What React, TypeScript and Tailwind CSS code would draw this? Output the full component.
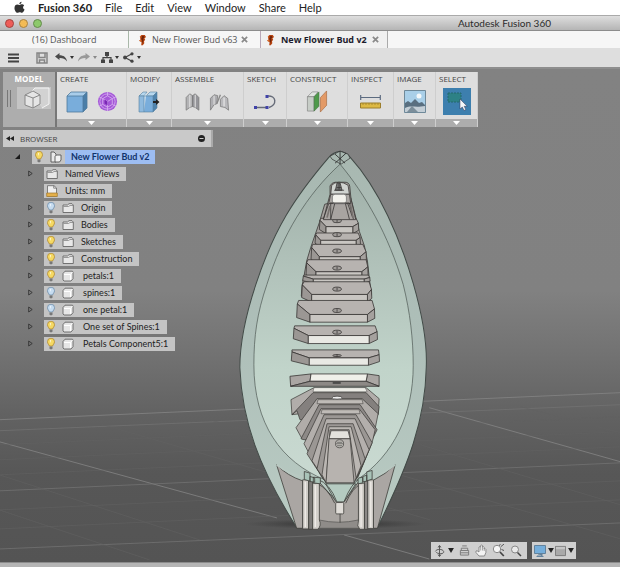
import React from "react";

const menus = ["File", "Edit", "View", "Window", "Share", "Help"];

function AppleLogo() {
  return (
    <svg viewBox="0 0 14 16" className="h-[13px] w-[11px]" aria-hidden="true">
      <path d="M9.6 0.6c.1 1.7-1.3 3-2.8 3C6.600 2 8.100.8 9.600.6zM12.900 5.400c-2.100 1.300-1.700 4.200.5 5.100-.7 2-2 4.300-3.400 4.300-1.100 0-1.400-.6-2.700-.6s-1.700.6-2.700.6C2.700 14.900.6 11.500.6 8.500c0-2.900 1.800-4.400 3.600-4.400 1.200 0 2.100.7 2.900.7.7 0 1.800-.8 3.200-.8 1.100 0 2 .5 2.600 1.400z" fill="#333" />
    </svg>
  );
}

function FlameIcon() {
  return (
    <svg viewBox="0 0 9 12" className="h-[12px] w-[9px]" aria-hidden="true">
      <path d="M3.500 1h3.300l1.200 2-1.600 1.400.8 1.400-1.200 1.400.3 2.100-1.500 2H3.200l.4-3L1 6.800 2.500 5.400 1.800 2.600z" fill="#b5420f" />
      <path d="M4.200 2h1.600l.5 1.200L5 4.800l.6 1.500L4.600 8 4 10 3.800 6 3.200 4z" fill="#6e240b" />
      <path d="M2 2.900 3 2.100l.4 2.200zM1.200 6.700l2-.6.4 1.700z" fill="#e67a32" />
    </svg>
  );
}

function CloseTab({ name }: { name: string }) {
  return (
    <button type="button" aria-label={"Close " + name} className="flex">
      <svg viewBox="0 0 8 8" className="h-[7px] w-[7px]" aria-hidden="true">
        <path d="M1 1l6 6M7 1L1 7" stroke="#8a8a8a" strokeWidth="2" />
      </svg>
    </button>
  );
}

const SmallCaret = ({ faint = false }: { faint?: boolean }) => (
  <svg viewBox="0 0 4 3" className="h-[3px] w-[4px]" aria-hidden="true">
    <path d="M0 0h4L2 3z" fill={faint ? "#888" : "#333"} />
  </svg>
);

function QuickBar() {
  return (
    <div className="flex h-[21px] items-center border-b-2 border-[#8e8e8e] bg-[#dedede] pl-2">
      <button type="button" aria-label="Data panel" className="mr-[17px]">
        <svg viewBox="0 0 11 10" className="h-[10px] w-[11px]"><path d="M0 1.500h11M0 5h11M0 8.500h11" stroke="#444" strokeWidth="1.800" /></svg>
      </button>
      <button type="button" aria-label="Save" className="mr-[7px]">
        <svg viewBox="0 0 12 12" className="h-[12px] w-[12px]" fill="none" stroke="#858585" strokeWidth="1.500">
          <path d="M1 1h10v10H1zM3 1v4.500h6V1M3.500 11V8h5v3" />
        </svg>
      </button>
      <button type="button" aria-label="Undo" className="mr-[4px] flex items-center gap-[3px]">
        <svg viewBox="0 0 12 9" className="h-[9px] w-[12px]"><path d="M0 3.500 4.500 0v2.200c4 0 7 2 7.500 6.300-2-3-4.500-3.700-7.500-3.600V7z" fill="#4a4a4a" /></svg>
        <SmallCaret />
      </button>
      <button type="button" aria-label="Redo" className="mr-[4px] flex items-center gap-[3px]">
        <svg viewBox="0 0 12 9" className="h-[9px] w-[12px]"><path d="M12 3.500 7.500 0v2.200C3.500 2.200.5 4.200 0 8.500c2-3 4.500-3.700 7.500-3.600V7z" fill="#999" /></svg>
        <SmallCaret faint />
      </button>
      <button type="button" aria-label="Hierarchy" className="mr-[4px] flex items-center gap-[2px]">
        <svg viewBox="0 0 12 11" className="h-[11px] w-[12px]"><path d="M4 0h4v4H4zM0 7.500h4V11H0zM8 7.500h4V11H8z" fill="#444" /><path d="M6 4v1.700M2 8V5.700h8V8" stroke="#444" strokeWidth="1.200" fill="none" /></svg>
        <SmallCaret />
      </button>
      <button type="button" aria-label="Share" className="flex items-center gap-[3px]">
        <svg viewBox="0 0 11 11" className="h-[11px] w-[11px]"><path d="M9 1.800 2 5.500l7 3.700" stroke="#444" strokeWidth="1.200" fill="none" /><circle cx="9" cy="1.800" r="1.600" fill="#444" /><circle cx="2" cy="5.500" r="1.900" fill="#444" /><circle cx="9" cy="9.200" r="1.600" fill="#444" /></svg>
        <SmallCaret />
      </button>
    </div>
  );
}

/* Ribbon icons */
const BoxIcon = () => (
  <svg viewBox="0 0 22 22" className="h-[22px] w-[22px]" aria-hidden="true">
    <path d="M1 5 5 1h16l-4 4z" fill="#a9cdea" /><path d="M17 5l4-4v16l-4 4z" fill="#4a7ea8" /><path d="M1 5h16v16H1z" fill="#79addb" />
    <path d="M1 5 5 1h16v16l-4 4H1zM1 5h16v16M17 5l4-4" fill="none" stroke="#4f7a9c" strokeWidth=".8" />
  </svg>
);
const FormIcon = () => (
  <svg viewBox="0 0 22 22" className="h-[21px] w-[21px]" aria-hidden="true">
    <circle cx="11" cy="11" r="10" fill="#a558d8" /><circle cx="11" cy="11" r="8" fill="none" stroke="#cfa2ec" strokeWidth="1" />
    <path d="M6 8l5-3 5 3v6l-5 3-5-3zM6 8l5 3 5-3M11 11v6M11 1v4M2 6l4 2M20 6l-4 2M2 16l4-2M20 16l-4-2M11 17v4" fill="none" stroke="#d6aef0" strokeWidth=".9" />
    <path d="M8 9l3 2v4l-3-2z" fill="#7b27b5" />
  </svg>
);
const PressIcon = () => (
  <svg viewBox="0 0 22 22" className="h-[22px] w-[22px]" aria-hidden="true">
    <path d="M1 5l4-4h4L6 5zM8 5l4-4h7l-4 4z" fill="#b7d7ee" stroke="#55809f" strokeWidth=".6" />
    <path d="M1 5h5v16H1z" fill="#8fbade" /><path d="M6 5l2.500-3v16L6 21z" fill="#cde2f2" /><path d="M8 5h7v16H6z" fill="#79addb" /><path d="M15 5l4-4v16l-4 4z" fill="#4f83ad" />
    <path d="M1 5h14v16H1zM6 5v16M15 5l4-4v16l-4 4" fill="none" stroke="#55809f" strokeWidth=".6" />
    <path d="M15 10h3V8l3.500 3L18 14v-2h-3z" fill="#222" />
  </svg>
);
const JointIcon = () => (
  <svg viewBox="0 0 16 22" className="h-[20px] w-[15px]" aria-hidden="true">
    <path d="M1 20V6l4-4 3 2v12l-3 1z" fill="#b3b3b5" stroke="#777" strokeWidth=".8" /><path d="M8 4l3-2 4 4v14l-4-3-3-1z" fill="#95959a" stroke="#777" strokeWidth=".8" /><path d="M5 3v14M11 3v14" stroke="#dedede" strokeWidth="1.200" />
  </svg>
);
const AsBuiltIcon = () => (
  <svg viewBox="0 0 22 22" className="h-[20px] w-[21px]" aria-hidden="true">
    <path d="M1 20V7l4-4 4 1-1 9-3 1z" fill="#aeaeb2" stroke="#777" strokeWidth=".8" /><path d="M5 4v10" stroke="#e0e0e0" strokeWidth="1.200" />
    <path d="M8 13 12 3" stroke="#888" strokeWidth="1.500" /><path d="M12 8l4-4 4 3 1 13-4-3-5-1z" fill="#b9b9bc" stroke="#777" strokeWidth=".8" /><path d="M16 6v10" stroke="#e2e2e2" strokeWidth="1.500" />
  </svg>
);
const SketchIcon = () => (
  <svg viewBox="0 0 22 16" className="h-[16px] w-[22px]" aria-hidden="true">
    <path d="M2 13.500h11M13 2c10-1 10 9 2 11.500" fill="none" stroke="#666b78" strokeWidth="1.400" />
    <path d="M0 12h3v3H0zM11.500 12h3v3h-3zM11.500 1h3v3h-3z" fill="#4143a8" />
  </svg>
);
const PlaneIcon = () => (
  <svg viewBox="0 0 22 24" className="h-[23px] w-[22px]" aria-hidden="true">
    <path d="M1 7l5-5h6L8 7z" fill="#e1e5e1" stroke="#777" strokeWidth=".6" /><path d="M1 7h7v15H1z" fill="#c7cdc7" stroke="#777" strokeWidth=".6" /><path d="M8 7l5-5v15l-5 5z" fill="#4e9a4a" stroke="#3c6e3a" strokeWidth=".6" />
    <path d="M14.500 8 21 1v15l-6.500 7z" fill="#e39a67" stroke="#a86a40" strokeWidth=".7" />
  </svg>
);
const MeasureIcon = () => (
  <svg viewBox="0 0 21 14" className="h-[14px] w-[21px]" aria-hidden="true">
    <path d="M.7 0v5M20.300 0v5M1 2.500h19" stroke="#5c6b80" strokeWidth="1.200" /><path d="M.5 8h20v5H.5z" fill="#ddb944" stroke="#9c7e2c" /><path d="M3 8v2M6 8v2M9 8v2M12 8v2M15 8v2M18 8v2" stroke="#9c7e2c" strokeWidth=".7" />
  </svg>
);
const PhotoIcon = () => (
  <svg viewBox="0 0 22 23" className="h-[23px] w-[22px]" aria-hidden="true">
    <path d="M.5.5h21v22H.5z" fill="#a9cfe8" stroke="#6f8999" /><circle cx="15" cy="6" r="2.500" fill="#f3f8fa" /><path d="M1 13l3-2 3 2 4-4 4 4 3-1 3 3v4H1z" fill="#596f80" /><path d="M1 18c6-3 10 0 20-2v6H1z" fill="#c3ced6" /><path d="M3 22l5-6 6 6z" fill="#7c8e9a" />
  </svg>
);
const SelectIcon = () => (
  <svg viewBox="0 0 28 27" className="h-[27px] w-[28px]" aria-hidden="true">
    <path d="M0 0h28v27H0z" fill="#3d7fae" /><path d="M5 5h13v9H5z" fill="#2d8186" stroke="#24686d" strokeDasharray="2 1" /><path d="M17 11v10l2.300-2 1.700 3.500 1.800-.9-1.600-3.300h3z" fill="#f5f8fa" stroke="#335" strokeWidth=".5" />
  </svg>
);

const panels = [
  { name: "CREATE", width: "w-[70px]", icons: [BoxIcon, FormIcon] },
  { name: "MODIFY", width: "w-[45px]", icons: [PressIcon] },
  { name: "ASSEMBLE", width: "w-[72px]", icons: [JointIcon, AsBuiltIcon] },
  { name: "SKETCH", width: "w-[43px]", icons: [SketchIcon] },
  { name: "CONSTRUCT", width: "w-[61px]", icons: [PlaneIcon] },
  { name: "INSPECT", width: "w-[46px]", icons: [MeasureIcon] },
  { name: "IMAGE", width: "w-[42px]", icons: [PhotoIcon] },
  { name: "SELECT", width: "w-[42px]", icons: [SelectIcon] },
];

function Ribbon() {
  return (
    <div className="flex h-[55px] w-fit bg-[#dedede] text-[8px] leading-[10px] text-[#444]">
      <button type="button" className="flex w-[54px] flex-col items-center border-r-2 border-[#777] bg-[#adadad] pt-[2px] font-bold text-white">
        MODEL
        <span className="mt-[3px] flex w-full items-center gap-[6px] pl-[4px]">
          <span className="h-[17px] w-[4px] border-x border-[#777]" />
          <svg viewBox="0 0 34 22" className="h-[22px] w-[34px]" aria-hidden="true">
            <path d="M0 0h34v22H0z" fill="#c4c4c4" /><path d="M14 5l4-4h14v16l-7 4" fill="#d2d2d2" stroke="#f4f4f4" /><path d="M8 8l8-4 7 4v9l-7 4-8-3z" fill="#e5e5e5" stroke="#888" /><path d="M8 8l8 3 7-3M16 11v10" fill="none" stroke="#888" />
          </svg>
        </span>
      </button>
      {panels.map((p) => (
        <section key={p.name} className={"flex flex-col border-r border-[#cecece] " + p.width}>
          <h2 className="pl-[3px] pt-[2px] text-[8px]">{p.name}</h2>
          <div className="flex flex-1 items-center justify-center gap-[9px]">
            {p.icons.map((Icon, i) => (
              <button type="button" key={i} aria-label={p.name + " tool " + (i + 1)}><Icon /></button>
            ))}
          </div>
          <button type="button" aria-label={p.name + " menu"} className="flex h-[8px] items-center justify-center bg-[#adadad]">
            <svg viewBox="0 0 7 4" className="h-[4px] w-[7px]"><path d="M0 0h7L3.500 4z" fill="#fff" /></svg>
          </button>
        </section>
      ))}
    </div>
  );
}

/* Browser tree */
const Bulb = ({ on = true }: { on?: boolean }) => (
  <svg viewBox="0 0 8 12" className="h-[12px] w-[8px]" aria-hidden="true">
    <path d="M2.400 8C1.900 6.300.5 5.700.5 3.700a3.500 3.500 0 0 1 7 0c0 2-1.400 2.600-1.900 4.300z" fill={on ? "#f5d964" : "#c6dcf0"} stroke={on ? "#b38a30" : "#6d8daa"} strokeWidth=".8" />
    <path d="M3 2.500 4 2l-.3 3z" fill="#fff" /><path d="M2.500 8.500h3v2.200L4 11.600l-1.500-.9z" fill="#777" />
  </svg>
);
const Folder = () => (
  <svg viewBox="0 0 12 10" className="h-[10px] w-[12px]" aria-hidden="true">
    <path d="M1 9.500V2h4.500L7 .7h3L11.300 2v7.500z" fill="#e8e8e8" stroke="#666" strokeWidth=".9" /><path d="M1.500 3.500h5L8 2.500h3" stroke="#777" strokeWidth=".7" fill="none" />
  </svg>
);
const Part = () => (
  <svg viewBox="0 0 12 12" className="h-[12px] w-[12px]" aria-hidden="true">
    <path d="M1 3.500 3 1.200h7.500l.5 1v6.500L9 11H2l-1-1z" fill="#e6e6e6" stroke="#666" strokeWidth=".9" /><path d="M2 4.500h6.500v5.500M8.500 4.500l2-2.500" fill="none" stroke="#fff" />
  </svg>
);
const Units = () => (
  <svg viewBox="0 0 12 12" className="h-[12px] w-[12px]" aria-hidden="true">
    <path d="M1.500.7H8L10.500 3v8h-9z" fill="#efefef" stroke="#666" strokeWidth=".8" /><path d="M.7 8h10.600v3.500H.7z" fill="#e4b04a" stroke="#9d772c" strokeWidth=".7" /><path d="M7.700.7V3.200h2.600" fill="none" stroke="#666" strokeWidth=".7" />
  </svg>
);
const RootIcon = () => (
  <svg viewBox="0 0 12 12" className="h-[12px] w-[12px]" aria-hidden="true">
    <path d="M1 11V1h3l2 2v8z" fill="#e9e9e9" stroke="#555" strokeWidth=".9" /><path d="M5 11V5.500L6.500 4H11v5l-1.500 2z" fill="#f2f2f2" stroke="#555" strokeWidth=".9" />
  </svg>
);

type Node = { label: string; kind: "folder" | "part" | "units"; bulb?: "on" | "off" };
const nodes: Node[] = [
  { label: "Named Views", kind: "folder" },
  { label: "Units: mm", kind: "units" },
  { label: "Origin", kind: "folder", bulb: "off" },
  { label: "Bodies", kind: "folder", bulb: "on" },
  { label: "Sketches", kind: "folder", bulb: "on" },
  { label: "Construction", kind: "folder", bulb: "on" },
  { label: "petals:1", kind: "part", bulb: "on" },
  { label: "spines:1", kind: "part", bulb: "off" },
  { label: "one petal:1", kind: "part", bulb: "off" },
  { label: "One set of Spines:1", kind: "part", bulb: "on" },
  { label: "Petals Component5:1", kind: "part", bulb: "on" },
];

function Browser() {
  return (
    <aside className="mt-[3px] w-[210px] font-['Lato','Open_Sans',sans-serif] text-[9px] leading-[14px] text-[#222]">
      <header className="flex h-[17px] items-center border-r-2 border-[#aaa] bg-[#c9c9c9] pl-[3px] pr-[6px]">
        <button type="button" aria-label="Collapse browser">
          <svg viewBox="0 0 8 5" className="h-[5px] w-[8px]"><path d="M4 0v5L0 2.500zM8 0v5L4 2.500z" fill="#222" /></svg>
        </button>
        <h2 className="ml-[6px] font-['Open_Sans','Noto_Sans',sans-serif] text-[8px] text-[#444]">BROWSER</h2>
        <button type="button" aria-label="Browser options" className="ml-auto">
          <svg viewBox="0 0 7 7" className="h-[7px] w-[7px]"><circle cx="3.500" cy="3.500" r="3.500" fill="#222" /><path d="M1.500 3.500h4" stroke="#ccc" /></svg>
        </button>
      </header>
      <ul className="mt-[2px] flex flex-col gap-[2px]">
        <li className="flex h-[15px] items-center pl-[12px]">
          <button type="button" aria-label="Collapse New Flower Bud v2" className="mr-[12px]">
            <svg viewBox="0 0 5 5" className="h-[5px] w-[5px]"><path d="M5 0v5H0z" fill="#1a1a1a" /></svg>
          </button>
          <div className="flex h-[14px] items-center bg-[#c4c4c4]">
            <span className="flex items-center gap-[7px] px-[3px]"><Bulb /><RootIcon /></span>
            <span className="bg-[#9dbdf2] px-[6px] font-bold text-[#10336b]">New Flower Bud v2</span>
          </div>
        </li>
        {nodes.map((n) => (
          <li key={n.label} className="flex h-[15px] items-center pl-[25px]">
            <span className="flex w-[16px]">
              {n.kind !== "units" && (
                <button type="button" aria-label={"Expand " + n.label}>
                  <svg viewBox="0 0 5 7" className="h-[7px] w-[5px]"><path d="M.7 1v5l3.500-2.500z" fill="none" stroke="#333" strokeWidth=".9" /></svg>
                </button>
              )}
            </span>
            <div className="flex h-[14px] items-center bg-[#c4c4c4] pl-[2px] pr-[7px]">
              {n.bulb && <span className="mr-[7px] pl-[1px]"><Bulb on={n.bulb === "on"} /></span>}
              {n.kind === "folder" ? <Folder /> : n.kind === "part" ? <Part /> : <Units />}
              <span className={n.kind === "part" ? "ml-[9px]" : "ml-[7px]"}>{n.label}</span>
            </div>
          </li>
        ))}
      </ul>
    </aside>
  );
}

/* 3D viewport drawing */
type Pt = [number, number];
const pts = (a: Pt[]) => a.map((p) => p.join(",")).join(" ");

type Slat = { top: [number, number, number]; mid: number; low: number; l: number; r: number; fl: number; fr: number; light?: boolean; hole?: number };
const slats: Slat[] = [
  { top: [222, 272, 378], mid: 247, low: 268, l: 268, r: 385, fl: 288, fr: 368, hole: 229 },
  { top: [266, 260, 384], mid: 288, low: 309, l: 255, r: 390, fl: 272, fr: 378, hole: 271 },
  { top: [300, 248, 398], mid: 337, low: 358, l: 243, r: 408, fl: 268, fr: 390, hole: 320 },
  { top: [346, 234, 408], mid: 382, low: 405, l: 228, r: 413, fl: 258, fr: 395, hole: 371 },
  { top: [392, 222, 414], mid: 404, low: 416, l: 218, r: 419, fl: 250, fr: 402 },
  { top: [412, 222, 417], mid: 450, low: 473, l: 215, r: 424, fl: 245, fr: 412, hole: 434 },
  { top: [468, 206, 426], mid: 510, low: 533, l: 200, r: 433, fl: 240, fr: 412, hole: 498 },
  { top: [544, 194, 435], mid: 573, low: 597, l: 190, r: 441, fl: 235, fr: 417, light: true, hole: 563 },
  { top: [616, 186, 445], mid: 640, low: 662, l: 184, r: 447, fl: 238, fr: 415, light: true, hole: 633 },
];

function Slats() {
  return (
    <g transform="translate(230 145) scale(.33333)" stroke="#383634" strokeWidth="2.400" strokeLinejoin="round">
      <path d="M284 180 268 235 254 275 242 310 230 350 222 395 216 425 214 455 245 473 412 473 424 450 418 405 412 350 403 305 388 262 376 215 362 160z" fill="#a5a19e" />
      {slats.map((s, i) => {
        const [y, a, b] = s.top;
        const h = s.low - s.mid;
        const yl = y + (s.mid - y) * 0.25;
        const yr = y + (s.mid - y) * 0.6;
        return (
          <g key={i}>
            <polygon points={pts([[a, y], [b, y], [s.r, yr], [s.fr, s.mid], [s.fl, s.mid], [s.l + 2, yl]])} fill="#b7b3b0" />
            <polygon points={pts([[s.l + 2, yl], [s.fl, s.mid], [s.fl, s.low], [s.l, s.low - h * 0.6]])} fill="#9b9794" />
            <polygon points={pts([[s.r, yr], [s.fr, s.mid], [s.fr, s.low], [s.r + 1, s.low - h * 0.5]])} fill="#a5a19e" />
            <polygon points={pts([[s.fl, s.mid], [s.fr, s.mid], [s.fr, s.low], [s.fl, s.low]])} fill={s.light ? "#e9e9e4" : "#c9c6c2"} />
            {s.hole && <ellipse cx="321" cy={s.hole} rx="13" ry={i > 7 ? 3 : 6} fill="#a09c99" />}
            {s.hole && <path d={"M321 " + (s.hole - 4) + "v8"} />}
          </g>
        );
      })}
      <path d="M300 125q5-10 15-11h30q12 0 14 12l4 40 14 60h-97l20-76z" fill="#a8a4a1" />
      <path d="M302 150l3-27q8-9 22-9t27 9l4 27z" fill="#d0d3d0" />
      <path d="M302 150h56l4 28h-66z" fill="#aaa6a3" />
      <rect x="307" y="150" width="42" height="28" rx="8" fill="#f2f1ec" stroke="#777" />
      <path d="M300 176h58l12 49M296 178l-16 46M314 178l-12 47M346 178l12 47M302 178v46M353 178l14 40" fill="none" />
      <path d="M300 185l-9 35M361 180l8 40" stroke="#77726f" strokeWidth="5" />
      <path d="M316 138l5-22h9l6 22zM312 138h30M327 116v20M320 130h13" fill="#777" />
      <g>
        <path d="M180 695l63-7-3 22-58 15z" fill="#aaa6a3" />
        <path d="M447 693l-35-5-4 22 39 15z" fill="#aaa6a3" />
        <path d="M243 688h169l-4 22H240z" fill="#f0f0ea" />
        <path d="M182 725l58-15h168l39 15z" fill="#8d8986" />
        <path d="M308 715h24" stroke="#333" strokeWidth="4" />
      </g>
    </g>
  );
}

function NestedRibs() {
  const ribs: { p: Pt[]; fill: string }[] = [
    { p: [[291, 400], [314, 388], [366, 388], [379, 399], [378, 414], [300, 414], [292, 415]], fill: "#b1adaa" },
    { p: [[292, 415], [313, 393], [366, 393], [379, 407], [378, 415], [372, 420], [300, 420], [297, 411]], fill: "#84807e" },
    { p: [[296, 428], [317, 399], [362, 399], [378, 414], [375, 429], [370, 440], [302, 439]], fill: "#b0aca9" },
    { p: [[301, 439], [319, 405], [360, 405], [377, 430], [372, 440], [304, 440]], fill: "#8d8987" },
    { p: [[304, 444], [321, 409], [359, 409], [375, 430], [372, 443], [358, 477], [327, 483], [322, 478]], fill: "#b3afac" },
    { p: [[307, 454], [324, 415], [356, 415], [372, 443], [357, 478], [326, 482], [316, 468]], fill: "#9b9794" },
    { p: [[312, 461], [326, 419], [355, 419], [369, 450], [357, 478], [326, 482]], fill: "#b4b0ad" },
    { p: [[317, 469], [327, 424], [353, 424], [365, 459], [356, 479], [326, 483]], fill: "#9c9895" },
    { p: [[322, 475], [329, 427], [351, 427], [361, 466], [355, 481], [326, 483]], fill: "#bbb7b3" },
    { p: [[326, 483], [330, 430], [349, 430], [356, 478], [354, 483]], fill: "#aaa6a3" },
  ];
  return (
    <g stroke="#383634" strokeWidth=".7" strokeLinejoin="round">
      {ribs.map((r, i) => <polygon key={i} points={pts(r.p)} fill={r.fill} />)}
      <path d="M314 388h51l2 4h-54z" fill="#ecece6" strokeWidth=".4" />
      <path d="M318 400h44l1 4h-46zM322 410h37l1 4h-39z" fill="#bfbbb7" strokeWidth=".5" />
      <path d="M331 431h17l2 8h-21z" fill="#e3e1dc" />
      <path d="M329 439h21l4 44h-28z" fill="#b7b3af" />
      <ellipse cx="337" cy="398" rx="5" ry="1.500" fill="#eee" />
      <circle cx="339.500" cy="444" r="4" fill="#c4c1bd" /><path d="M336 444h7M337 442.500h5M337 446h5" strokeWidth=".6" />
    </g>
  );
}

function Base() {
  return (
    <g transform="translate(230 400) scale(.33333)" stroke="#3f3e3b" strokeWidth="2.400" strokeLinejoin="round">
      <path d="M140 195q32 33 78 48v142h-18z" fill="#aaa6a3" />
      <path d="M495 195q-28 28-65 46v144h12z" fill="#aaa6a3" />
      <path d="M140 195q40 30 85 38" fill="none" stroke="#b9c9c2" strokeWidth="5" />
      <path d="M495 195q-35 26-68 38" fill="none" stroke="#b9c9c2" strokeWidth="5" />
      <path d="M266 245l54 60h22l44-60v120q-60 14-120 0z" fill="#a9a5a1" />
      <path d="M266 360q60 14 120 0v25H266z" fill="#8f8c89" stroke="#5e5c5a" />
      <path d="M287 252h90l-35 54h-24z" fill="#b5cbc1" />
      <path d="M262 238q38 13 58 67M262 252q30 12 52 58M390 236q-25 12-48 69M393 252q-26 12-46 58" fill="none" />
      <path d="M218 240h18v147h-18z" fill="#d0cdc8" />
      <path d="M236 238h12v150h-12z" fill="#7d7b79" />
      <path d="M248 250h20v110q7 18-5 28h-15z" fill="#d3d0cb" />
      <path d="M385 250h18v138h-14q-10-10-4-24z" fill="#d3d0cb" />
      <path d="M403 243h10v145h-10z" fill="#8b8886" />
      <path d="M413 240h17v146h-17z" fill="#d0cdc8" />
      <path d="M223 215l17 5v24l-17-5zM250 232l21 2v18l-21-3zM410 216l16-4v26l-16 5zM384 235l14-3v17l-14 3zM240 230l14 4v13l-14-2zM398 230l12-4v18l-12 2z" fill="#a9c3b8" />
      <rect x="317" y="308" width="24" height="34" rx="3" fill="#e0ddd8" />
      <path d="M330 342v26" />
      <path d="M226 246v135M256 256v125M393 256v125M422 246v135" stroke="#edeae6" strokeWidth="4" />
    </g>
  );
}

function Scene() {
  return (
    <svg viewBox="0 70 620 492" preserveAspectRatio="xMidYMin slice" className="absolute inset-0 h-full w-full" role="img" aria-label="Flower bud model">
      <defs>
        <linearGradient id="sky" x1="0" y1="0" x2="0" y2="1">
          <stop offset="0" stopColor="#828282" /><stop offset=".45" stopColor="#818181" /><stop offset=".58" stopColor="#727272" /><stop offset=".7" stopColor="#626262" /><stop offset=".82" stopColor="#575757" /><stop offset="1" stopColor="#545454" />
        </linearGradient>
        <linearGradient id="shell" x1="0" y1="0" x2="0" y2="1">
          <stop offset="0" stopColor="#a8b8b1" /><stop offset=".5" stopColor="#aebfb9" /><stop offset="1" stopColor="#b9cbc3" />
        </linearGradient>
        <linearGradient id="inside" x1="0" y1="0" x2="0" y2="1">
          <stop offset="0" stopColor="#9fafa8" /><stop offset=".35" stopColor="#b2c3bb" /><stop offset=".65" stopColor="#c1d4ca" /><stop offset="1" stopColor="#c9d9d1" />
        </linearGradient>
        <radialGradient id="shade"><stop offset="0" stopColor="#292929" stopOpacity=".9" /><stop offset="1" stopColor="#333" stopOpacity="0" /></radialGradient>
      </defs>
      <path d="M0 70h620v492H0z" fill="url(#sky)" />
      <g fill="none" stroke="#858585" strokeWidth=".8">
        <path d="M0 420 620 393M0 442 277 518M344 535 429 559M429 408 620 462" />
        <path d="M0 431 620 405M0 491 620 463M0 549 620 523" stroke="#727272" />
        <path d="M0 445 620 417M0 460 620 432M0 475 620 447M0 510 620 481M0 529 620 500M100 424 430 520M210 420 620 539M0 475 200 540M0 510 150 560M520 407 620 433M420 445 620 505" stroke="#626262" strokeWidth=".6" />
      </g>
      <ellipse cx="335" cy="524" rx="90" ry="5" fill="url(#shade)" />
      <path d="M340 152Q346 153 350 158C379 190 400 239 413 284C424 322 427 346 426 368C425 420 409 464 377 528H297C259 468 242 421 240 368C240 341 246 315 256 285C274 230 294 199 329 158Q333 153 340 152Z" fill="url(#shell)" stroke="#424a47" />
      <path d="M340 165C365 195 388 235 403 285C410 313 413 340 413 366C413 414 394 455 357 480H325C281 462 254 424 254 365C254 337 257 314 267 285C282 236 307 195 340 165Z" fill="url(#inside)" stroke="#4d5753" strokeWidth=".7" />
      <path d="M330 157l10-5 8 3 2 4-9 6-9-5z" fill="#a8b8b1" stroke="#333" strokeWidth=".7" />
      <path d="M335 155l10 9M346 154l-11 10M340 152v13" fill="none" stroke="#222" strokeWidth=".8" />
      <Slats />
      <NestedRibs />
      <Base />
    </svg>
  );
}

const NavCaret = () => (
  <svg viewBox="0 0 7 6" className="h-[5px] w-[6px]" aria-hidden="true"><path d="M0 0h7L3.500 6z" fill="#222" /></svg>
);

function NavBar() {
  return (
    <nav aria-label="View controls" className="mb-[3px] mr-[44px] mt-auto flex gap-[5px] self-end">
      <div className="flex h-[17px] w-[96px] items-center justify-between bg-[#cfcfcf] pl-[3px] pr-[5px]">
        <button type="button" aria-label="Orbit" className="flex items-center gap-[3px]">
          <svg viewBox="0 0 11 13" className="h-[12px] w-[11px]" fill="none" stroke="#555"><path d="M5.500 1v11M1 7c1-3 8-3 9 0s-6 3-8 1" /><path d="M4 2.500 5.500.5 7 2.500M4 10.500l1.500 2 1.500-2" fill="#555" /></svg>
          <NavCaret />
        </button>
        <button type="button" aria-label="Look at"><svg viewBox="0 0 11 12" className="h-[11px] w-[11px]" fill="none" stroke="#777"><path d="M1 6h9v5H1zM1 8.500h9M2 3.500h7M3 1h5M2 3.500V6M9 3.500V6" /></svg></button>
        <button type="button" aria-label="Pan"><svg viewBox="0 0 12 13" className="h-[13px] w-[12px]"><path d="M4 12 1 8.500V7l1-.3L4 8V3l1-.5.7.5V1.500l1-.5.8.5V3l1-.3.7.6V5l1-.3.7.7v3L9.500 12z" fill="#f3f3f3" stroke="#777" strokeWidth=".8" /><path d="M5.700 3v3.500M7.500 3v3.500M9.200 4v3" stroke="#888" strokeWidth=".7" /></svg></button>
        <button type="button" aria-label="Zoom"><svg viewBox="0 0 13 13" className="h-[13px] w-[13px]"><circle cx="5" cy="5" r="3.700" fill="#f5f5f5" stroke="#888" /><path d="M8 8l3.800 4" stroke="#444" strokeWidth="1.700" /><path d="M9 2.500 12 0M9.500 5.500l2.500 1M7 1.500 8.500.5" stroke="#555" /></svg></button>
        <button type="button" aria-label="Fit"><svg viewBox="0 0 12 12" className="h-[12px] w-[12px]"><circle cx="5" cy="4.500" r="3.500" fill="#e9e9e9" stroke="#888" /><path d="M7.500 7.500 11 11" stroke="#444" strokeWidth="1.500" /></svg></button>
      </div>
      <div className="flex h-[17px] w-[44px] items-center justify-between bg-[#cfcfcf] px-[2px]">
        <button type="button" aria-label="Display settings" className="flex items-center gap-[2px]">
          <svg viewBox="0 0 12 12" className="h-[12px] w-[12px]"><path d="M.5.5h11v8H.5z" fill="#75aedb" stroke="#62829c" /><path d="M4 9h4v2H3v1h6v-1" fill="#62829c" stroke="#62829c" /></svg>
          <NavCaret />
        </button>
        <button type="button" aria-label="Layout" className="flex items-center gap-[2px]">
          <svg viewBox="0 0 12 12" className="h-[12px] w-[11px]"><path d="M.5 1h11v10H.5z" fill="#a9a9a9" stroke="#777" /><path d="M1 1.500h10V4H1z" fill="#c5c5c5" /></svg>
          <NavCaret />
        </button>
      </div>
    </nav>
  );
}

export default function App() {
  return (
    <div className="flex min-h-screen flex-col overflow-hidden bg-[#bcbcbc] font-['Open_Sans','Noto_Sans',sans-serif] text-[10px] leading-[14px] text-[#222]">
      <nav aria-label="Application menu" className="flex h-[15px] items-center gap-[13px] bg-white pl-[14px] font-['Lato','Open_Sans',sans-serif] text-[11px]">
        <button type="button" aria-label="Apple menu"><AppleLogo /></button>
        <button type="button" className="font-bold">Fusion 360</button>
        {menus.map((m) => <button type="button" key={m}>{m}</button>)}
      </nav>
      <header className="flex h-[16px] items-center border-b border-t border-b-[#8c8c8c] border-t-[#aaa] bg-linear-to-b from-[#dedede] to-[#b5b5b5] pl-[5px]">
        <div className="flex gap-[5px]">
          <button type="button" aria-label="Close window" className="h-[9px] w-[9px] rounded-full border border-[#a34340] bg-[#ee5d58]" />
          <button type="button" aria-label="Minimise window" className="h-[9px] w-[9px] rounded-full border border-[#a98343] bg-[#f3bb55]" />
          <button type="button" aria-label="Zoom window" className="h-[9px] w-[9px] rounded-full border border-[#658b4d] bg-[#8dc96b]" />
        </div>
        <h1 className="ml-auto mr-[69px] font-['Lato','Open_Sans',sans-serif] text-[10px] text-[#2c2c2c]">Autodesk Fusion 360</h1>
      </header>
      <div className="flex h-[17px] bg-[#f6f6f6] text-[9px] text-[#555]">
        <div className="flex w-[129px] items-center border-r border-[#a9b8a9] pl-[32px]"><button type="button">(16) Dashboard</button></div>
        <div className="flex w-[132px] items-center border-r border-[#b9a9b9] pl-[9px]">
          <button type="button" className="mr-[4px] flex items-center gap-[5px]"><FlameIcon />New Flower Bud v63</button>
          <CloseTab name="New Flower Bud v63" />
        </div>
        <div className="flex w-[127px] items-center border-r border-[#aaa] bg-[#f0f0f0] pl-[5px] font-bold text-[#1c1c2c]">
          <button type="button" className="mr-[5px] flex items-center gap-[6px]"><FlameIcon />New Flower Bud v2</button>
          <CloseTab name="New Flower Bud v2" />
        </div>
      </div>
      <QuickBar />
      <main className="relative flex flex-1 flex-col bg-[#828282]">
        <Scene />
        <div className="relative flex flex-1 flex-col pl-[3px] pt-[3px]">
          <Ribbon />
          <Browser />
          <NavBar />
        </div>
      </main>
      <footer className="h-[5px] border-t border-[#8c8c8c] bg-[#b5b5b5]" />
    </div>
  );
}
